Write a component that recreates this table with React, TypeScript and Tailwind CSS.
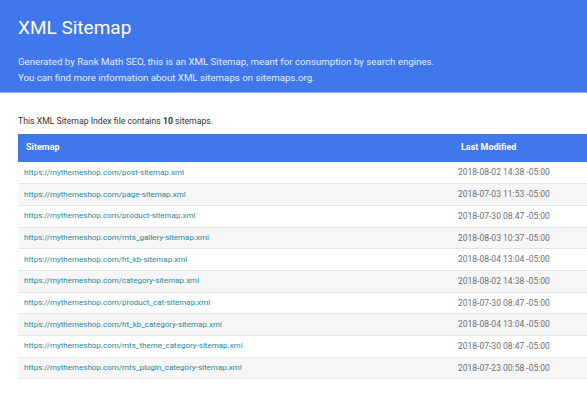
const rows = [
  ["https://mythemeshop.com/post-sitemap.xml", "2018-08-02 14:38 -05:00"],
  ["https://mythemeshop.com/page-sitemap.xml", "2018-07-03 11:53 -05:00"],
  ["https://mythemeshop.com/product-sitemap.xml", "2018-07-30 08:47 -05:00"],
  ["https://mythemeshop.com/mts_gallery-sitemap.xml", "2018-08-03 10:37 -05:00"],
  ["https://mythemeshop.com/ht_kb-sitemap.xml", "2018-08-04 13:04 -05:00"],
  ["https://mythemeshop.com/category-sitemap.xml", "2018-08-02 14:38 -05:00"],
  ["https://mythemeshop.com/product_cat-sitemap.xml", "2018-07-30 08:47 -05:00"],
  ["https://mythemeshop.com/ht_kb_category-sitemap.xml", "2018-08-04 13:04 -05:00"],
  ["https://mythemeshop.com/mts_theme_category-sitemap.xml", "2018-07-30 08:47 -05:00"],
  ["https://mythemeshop.com/mts_plugin_category-sitemap.xml", "2018-07-23 00:58 -05:00"],
];

const App = () => {
  return (
    <div className="w-[587px] h-[400px] overflow-hidden bg-white font-['Roboto',sans-serif]">
      {/* header */}
      <div className="bg-[#4077ec] h-[93px] px-[18px] pt-[17px] border-b border-[#8fb0f3]">
        <h1 className="text-white text-[19px] leading-[22px]">XML Sitemap</h1>
        <p className="text-[#e4ecfd] text-[9.7px] leading-[16px] mt-[15px]">
          Generated by Rank Math SEO, this is an XML Sitemap, meant for consumption by search engines.
          <br />
          You can find more information about XML sitemaps on sitemaps.org.
        </p>
      </div>

      <div className="pl-[18px]">
        <p className="text-[#333] text-[8.7px] leading-[12px] mt-[22px] mb-[7px]">
          This XML Sitemap Index file contains <b>10</b> sitemaps.
        </p>
        <table className="w-[569px] border-collapse">
          <thead>
            <tr className="bg-[#4077ec] h-[28px] text-white text-[9px] font-bold text-left">
              <th className="pl-[8px] font-bold">Sitemap</th>
              <th className="w-[137px] pl-[11px] font-bold">Last Modified</th>
            </tr>
          </thead>
          <tbody>
            {rows.map((r, i) => (
              <tr
                key={i}
                className={`h-[21.7px] border-b border-[#e6e6e6] ${i % 2 ? "bg-[#f6f6f6]" : "bg-white"}`}
              >
                <td className="pl-[6px] text-[#2a8898] text-[8px]">{r[0]}</td>
                <td className="pl-[8px] text-[#6f6f6f] text-[8.5px]">{r[1]}</td>
              </tr>
            ))}
          </tbody>
        </table>
      </div>
    </div>
  );
};

export default App;
